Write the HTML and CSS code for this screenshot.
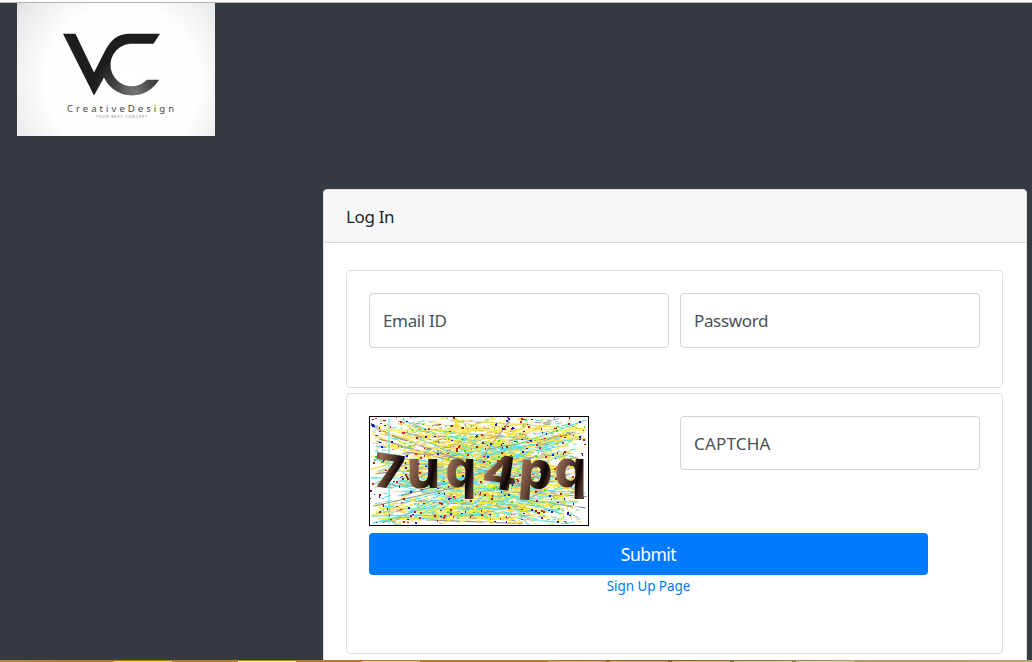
FILE: index.html
```html
<!DOCTYPE html>
<html lang="en">
<head>
<meta charset="utf-8">
<title>Log In</title>
<link rel="stylesheet" href="styles.css">
</head>
<body>
<div class="topline"></div>
<main class="page">
  <svg class="logo" viewBox="17 3 198 133" role="img" aria-label="VC CreativeDesign">
    <defs>
      <radialGradient id="paper" gradientUnits="userSpaceOnUse" cx="122" cy="82" r="142">
        <stop offset="0" stop-color="#fff"/><stop offset=".54" stop-color="#fefefe"/><stop offset=".8" stop-color="#ededef"/><stop offset="1" stop-color="#d8d8da"/>
      </radialGradient>
      <radialGradient id="shine" gradientUnits="userSpaceOnUse" cx="134" cy="92" r="40">
        <stop offset="0" stop-color="#777679"/><stop offset=".45" stop-color="#49484a"/><stop offset="1" stop-color="#1e1d1d"/>
      </radialGradient>
    </defs>
    <rect x="17" y="3" width="198" height="133" fill="url(#paper)"/>
    <path fill="url(#shine)" d="M63 33.7H75.5L94 72.5L105 51C110 41 117 34 128 33.7H160L153.5 43.7H130A21.3 21.3 0 1 0 147 79.8H159A31 31 0 0 1 104 77.5L94 95.5Z"/>
    <text class="brand" x="67" y="112" textLength="107">CreativeDesign</text>
    <text class="slogan" x="96" y="118.4" textLength="51">YOUR BEST CONCEPT</text>
  </svg>
  <section class="card">
    <header class="card-header">Log In</header>
    <form class="card-body">
      <div class="panel credentials">
        <input class="field" type="email" placeholder="Email ID" aria-label="Email ID">
        <input class="field password" type="password" placeholder="Password" aria-label="Password">
      </div>
      <div class="panel verify">
        <div class="row">
          <div class="captcha-cell">
            <svg class="captcha" viewBox="369 416 220 110">
              <defs>
                <linearGradient id="bronze" x1="0" y1="0" x2="1" y2=".45">
                  <stop offset="0" stop-color="#2e1a12"/><stop offset=".25" stop-color="#9a6b56"/><stop offset=".52" stop-color="#6b4837"/><stop offset=".85" stop-color="#0c0503"/><stop offset="1" stop-color="#54382b"/>
                </linearGradient>
              </defs>
              <rect x="369" y="416" width="220" height="110" fill="#fff"/>
              <g id="strokes"></g>
              <g id="dots"></g>
              <g class="code">
                <text transform="translate(371 486) rotate(8) scale(1.12 1)" font-size="48">7</text>
                <text transform="translate(406 488) scale(.98 1)" font-size="54">u</text>
                <text transform="translate(445 487) scale(.96 1)" font-size="52">q</text>
                <text transform="translate(482 487) rotate(8) scale(1.16 1)" font-size="48">4</text>
                <text transform="translate(517 487) rotate(4) scale(1.08 1)" font-size="51">p</text>
                <text transform="translate(554 487) scale(1 1)" font-size="52">q</text>
              </g>
              <rect x="369.5" y="416.5" width="219" height="109" fill="none" stroke="#000"/>
            </svg>
          </div>
          <input class="field captcha-field" type="text" placeholder="CAPTCHA" aria-label="CAPTCHA">
        </div>
        <div class="actions">
          <button class="submit" type="button">Submit</button>
          <a class="signup" href="#">Sign Up Page</a>
        </div>
      </div>
    </form>
  </section>
</main>
<footer class="taskbar">
  <i class="t1"></i><i class="t2"></i><i class="t3"></i><i class="t4"></i><i class="t5"></i><i class="t6"></i><i class="t7"></i><i class="t8"></i>
</footer>
<script src="captcha.js"></script>
</body>
</html>
```
FILE: styles.css
```css
* { box-sizing: border-box; }
body { margin: 0; height: 662px; overflow: hidden; display: flex; flex-direction: column; background: #353940; font-family: "Segoe UI", "Noto Sans", sans-serif; color: #212529; }
.topline { height: 3px; flex: none; background: #fdfdfd; border-bottom: 1px solid #b3b3b8; }
.page { height: 657px; flex: none; overflow: hidden; }
.logo { display: block; width: 198px; height: 133px; margin-left: 17px; }
.brand { font: 9.5px "Noto Sans", sans-serif; fill: #454545; }
.slogan { font: 3.5px "Noto Sans", sans-serif; fill: #777; }
.card { width: 704px; height: 530px; margin: 53px 0 0 323px; background: #fff; border: 1px solid #dfdfdf; border-radius: 4px; }
.card-header { height: 53px; padding: 0 22px; border-bottom: 1px solid #d8d8d8; border-radius: 3px 3px 0 0; background: #f7f7f7; font-size: 17px; line-height: 53px; letter-spacing: -.35px; }
.card-body { margin: 0; padding: 27px 23px 0 22px; display: flex; flex-direction: column; gap: 5px; }
.panel { border: 1px solid #dfdfdf; border-radius: 4px; padding: 22px; }
.credentials { height: 118px; display: flex; gap: 11px; }
.verify { height: 261px; }
.row { display: flex; gap: 11px; height: 117px; }
.captcha-cell { width: 300px; }
.captcha { display: block; width: 220px; height: 110px; }
.code { font-family: "Noto Sans", sans-serif; font-weight: 800; fill: url(#bronze); }
.field { width: 300px; height: 55px; padding: 0 13px; border: 1px solid #ced4da; border-radius: 4px; background: #fff; font: 17px "Segoe UI", "Noto Sans", sans-serif; letter-spacing: -.35px; }
.field::placeholder { color: #495057; opacity: 1; }
.captcha-field { height: 54px; letter-spacing: .2px; }
.actions { width: 559px; display: flex; flex-direction: column; align-items: center; }
.submit { width: 559px; height: 42px; padding: 0; border: 0; border-radius: 4px; background: #007bff; color: #fff; font: 17.5px "Segoe UI", "Noto Sans", sans-serif; letter-spacing: -.5px; }
.signup { color: #007bff; font-size: 13.5px; line-height: 23px; text-decoration: none; letter-spacing: -.08px; }
.taskbar { height: 2px; flex: none; display: flex; background: linear-gradient(90deg, #b98938, #b97b20 80px, #b97b20 550px, #8e5a19 650px, #8e733f 760px, #b79a61 860px, #bca16c); }
.taskbar i { height: 1px; margin-top: 1px; flex: none; }
.t1 { width: 58px; margin-left: 114px; background: #e6c68a; }
.t2 { width: 58px; margin-left: 66px; background: #fff8e9; }
.t3 { width: 58px; margin-left: 66px; background: #e6c68a; }
.t4 { width: 58px; margin-left: 128px; background: #dba873; }
.t5 { width: 58px; margin-left: 4px; background: #dba873; }
.t6 { width: 58px; margin-left: 4px; background: #d2b981; }
.t7 { width: 58px; margin-left: 4px; background: #dec99b; }
.t8 { width: 58px; margin-left: 4px; background: #dfcfa6; }
```
FILE: captcha.js
```javascript
// Seeded generator keeps the captcha noise stable between loads.
let seed = 90210;
function rnd() {
  seed = (seed + 0x6D2B79F5) | 0;
  let t = Math.imul(seed ^ (seed >>> 15), 1 | seed);
  t = (t + Math.imul(t ^ (t >>> 7), 61 | t)) ^ t;
  return ((t ^ (t >>> 14)) >>> 0) / 4294967296;
}
const pick = list => list[Math.floor(rnd() * list.length)];
const NS = "http://www.w3.org/2000/svg";
function add(parent, name, attrs) {
  const el = document.createElementNS(NS, name);
  for (const key in attrs) el.setAttribute(key, attrs[key]);
  parent.appendChild(el);
}
const strokes = document.getElementById("strokes");
const lineColors = ["#ffe93a", "#f5df45", "#5fe3e6", "#9d958f", "#ffef55", "#5cdcd8", "#f6d54c"];
for (let i = 0; i < 190; i++) {
  add(strokes, "line", {
    x1: 370 + rnd() * 100, y1: 418 + rnd() * 106,
    x2: 488 + rnd() * 99, y2: 418 + rnd() * 106,
    stroke: pick(lineColors), "stroke-width": 1.2
  });
}
// Broken fragments of white and colour speckle the long strokes.
for (let i = 0; i < 1300; i++) {
  const x = 371 + rnd() * 207, y = 418 + rnd() * 106;
  add(strokes, "line", {
    x1: x, y1: y, x2: x + 2 + rnd() * 6, y2: y + (rnd() - .6) * 4,
    stroke: pick(["#fbe84a", "#ffffff", "#62dcd8", "#ffffff", "#a69c96", "#f7d350", "#fff48a"]),
    "stroke-width": 1
  });
}
// A few long strokes stay on top: two cyan rules at the left and rising diagonals.
[[389, 418, 389, 524, "#54e2ea"], [370, 478, 450, 478, "#54e2ea"], [372, 516, 480, 515, "#54e2ea"],
 [480, 458, 586, 420, "#50d9df"], [374, 506, 470, 484, "#8f9a9a"], [380, 430, 586, 430, "#ffe93a"],
 [452, 420, 586, 429, "#f3dc3c"], [484, 455, 510, 420, "#a69b95"], [380, 522, 520, 480, "#5bd9dc"],
 [540, 440, 572, 520, "#f5df45"]].forEach(([x1, y1, x2, y2, stroke]) =>
  add(strokes, "line", { x1, y1, x2, y2, stroke, "stroke-width": 1.1 }));
const dots = document.getElementById("dots");
for (let i = 0; i < 400; i++) {
  add(dots, "rect", {
    x: Math.floor(370 + rnd() * 216), y: Math.floor(417 + rnd() * 106),
    width: rnd() < .7 ? 2 : 1, height: rnd() < .6 ? 2 : 1,
    fill: pick(["#1b18c8", "#d6222d", "#35d82d", "#9a2020"])
  });
}
```
